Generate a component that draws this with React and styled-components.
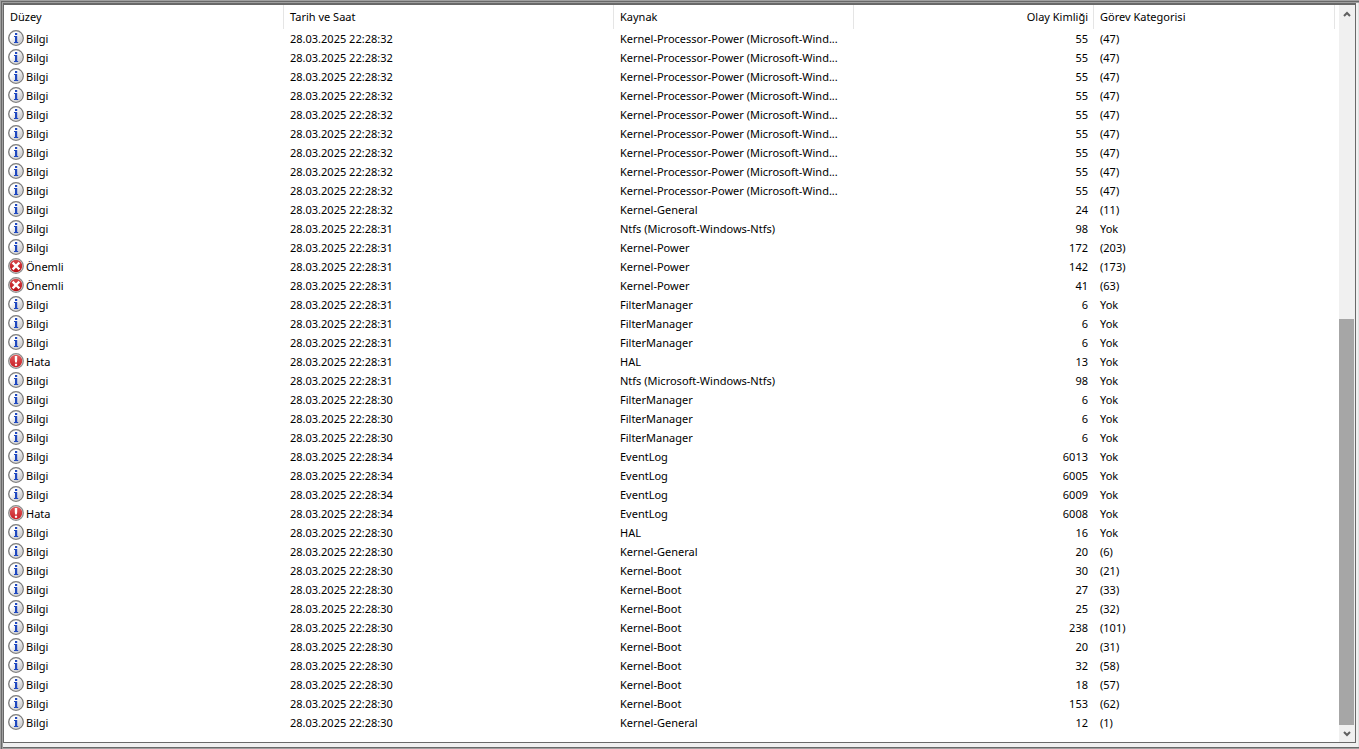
import React from 'react';
import styled, { createGlobalStyle } from 'styled-components';

const power = 'Kernel-Processor-Power (Microsoft-Wind...';
const ntfs = 'Ntfs (Microsoft-Windows-Ntfs)';

// [level, time, source, event id, category]
const events = [
  ...Array(9).fill(['Bilgi', '22:28:32', power, 55, '(47)']),
  ['Bilgi', '22:28:32', 'Kernel-General', 24, '(11)'],
  ['Bilgi', '22:28:31', ntfs, 98, 'Yok'],
  ['Bilgi', '22:28:31', 'Kernel-Power', 172, '(203)'],
  ['Önemli', '22:28:31', 'Kernel-Power', 142, '(173)'],
  ['Önemli', '22:28:31', 'Kernel-Power', 41, '(63)'],
  ['Bilgi', '22:28:31', 'FilterManager', 6, 'Yok'],
  ['Bilgi', '22:28:31', 'FilterManager', 6, 'Yok'],
  ['Bilgi', '22:28:31', 'FilterManager', 6, 'Yok'],
  ['Hata', '22:28:31', 'HAL', 13, 'Yok'],
  ['Bilgi', '22:28:31', ntfs, 98, 'Yok'],
  ['Bilgi', '22:28:30', 'FilterManager', 6, 'Yok'],
  ['Bilgi', '22:28:30', 'FilterManager', 6, 'Yok'],
  ['Bilgi', '22:28:30', 'FilterManager', 6, 'Yok'],
  ['Bilgi', '22:28:34', 'EventLog', 6013, 'Yok'],
  ['Bilgi', '22:28:34', 'EventLog', 6005, 'Yok'],
  ['Bilgi', '22:28:34', 'EventLog', 6009, 'Yok'],
  ['Hata', '22:28:34', 'EventLog', 6008, 'Yok'],
  ['Bilgi', '22:28:30', 'HAL', 16, 'Yok'],
  ['Bilgi', '22:28:30', 'Kernel-General', 20, '(6)'],
  ['Bilgi', '22:28:30', 'Kernel-Boot', 30, '(21)'],
  ['Bilgi', '22:28:30', 'Kernel-Boot', 27, '(33)'],
  ['Bilgi', '22:28:30', 'Kernel-Boot', 25, '(32)'],
  ['Bilgi', '22:28:30', 'Kernel-Boot', 238, '(101)'],
  ['Bilgi', '22:28:30', 'Kernel-Boot', 20, '(31)'],
  ['Bilgi', '22:28:30', 'Kernel-Boot', 32, '(58)'],
  ['Bilgi', '22:28:30', 'Kernel-Boot', 18, '(57)'],
  ['Bilgi', '22:28:30', 'Kernel-Boot', 153, '(62)'],
  ['Bilgi', '22:28:30', 'Kernel-General', 12, '(1)'],
];

const badges = {
  Bilgi: { fill: 'url(#silver)', ring: '#7d7d7d' },
  Önemli: { fill: 'url(#crimson)', ring: '#8c8c8c' },
  Hata: { fill: 'url(#red)', ring: '#8c8c8c' },
};

function LevelIcon({ level }) {
  const badge = badges[level];
  return (
    <Icon viewBox="0 0 16 16" aria-hidden="true">
      <circle cx="8" cy="8" r="7.3" fill="#e4e4e4" stroke={badge.ring} strokeWidth="1.3" />
      <circle cx="8" cy="8" r="6.2" fill={badge.fill} />
      {level === 'Bilgi' && (
        <path d="M7 3h2.2v2H7zM6 6h3.2v6h1v1H6v-1h1V7H6z" fill="#1f48c0" />
      )}
      {level === 'Önemli' && (
        <path d="M5.5 5.5l5 5M10.5 5.5l-5 5" stroke="#fff" strokeWidth="2.4" strokeLinecap="square" />
      )}
      {level === 'Hata' && (
        <path d="M6.8 3h2.4v4.2L8.8 9.6H7.2l-.4-2.4zM6.9 10.8h2.2v2H6.9z" fill="#fff" />
      )}
    </Icon>
  );
}

function App() {
  return (
    <Frame>
      <GlobalStyle />
      <Gradients aria-hidden="true">
        <defs>
          <linearGradient id="silver" x1="0" y1="0" x2="1" y2="1">
            <stop offset="0.3" stopColor="#fff" />
            <stop offset="1" stopColor="#bcbcc0" />
          </linearGradient>
          <linearGradient id="crimson" x1="0" y1="0" x2="0" y2="1">
            <stop offset="0" stopColor="#d9494c" />
            <stop offset="1" stopColor="#b80c12" />
          </linearGradient>
          <linearGradient id="red" x1="0" y1="0" x2="0" y2="1">
            <stop offset="0" stopColor="#e0595c" />
            <stop offset="1" stopColor="#c81e24" />
          </linearGradient>
        </defs>
      </Gradients>
      <Panel>
        <ListArea>
          <EventTable>
            <colgroup>
              <Column $width={280} />
              <Column $width={330} />
              <Column $width={240} />
              <Column $width={240} />
              <Column />
            </colgroup>
            <thead>
              <tr>
                <HeadCell scope="col">Düzey</HeadCell>
                <HeadCell scope="col">Tarih ve Saat</HeadCell>
                <HeadCell scope="col">Kaynak</HeadCell>
                <HeadCell scope="col" $align="right">Olay Kimliği</HeadCell>
                <HeadCell scope="col">Görev Kategorisi</HeadCell>
              </tr>
            </thead>
            <tbody>
              {events.map(([level, time, source, id, category], index) => (
                <tr key={index}>
                  <Cell>
                    <Level>
                      <LevelIcon level={level} />
                      {level}
                    </Level>
                  </Cell>
                  <Cell>28.03.2025 {time}</Cell>
                  <Cell>{source}</Cell>
                  <Cell $align="right">{id}</Cell>
                  <Cell>{category}</Cell>
                </tr>
              ))}
            </tbody>
          </EventTable>
        </ListArea>
        <ScrollBar>
          <ScrollButton type="button" aria-label="Yukarı kaydır">
            <Arrow viewBox="0 0 8 6"><path d="M1 5l3-3 3 3" /></Arrow>
          </ScrollButton>
          <Track><Thumb /></Track>
          <ScrollButton type="button" aria-label="Aşağı kaydır">
            <Arrow viewBox="0 0 8 6"><path d="M1 1l3 3 3-3" /></Arrow>
          </ScrollButton>
        </ScrollBar>
      </Panel>
      <BottomEdge />
    </Frame>
  );
}

const GlobalStyle = createGlobalStyle`
  body {
    margin: 0;
    background: #f0f0f0;
    color: #000;
    font: 11px/19px "Noto Sans", "Open Sans", sans-serif;
  }
`;

// sunken window edge: light, dark, light
const Frame = styled.div`
  display: flex;
  flex-direction: column;
  box-sizing: border-box;
  height: 100vh;
  padding: 3px 0 0 3px;
  box-shadow:
    inset 1px 1px 0 #a0a0a0,
    inset 2px 2px 0 #696969,
    inset 3px 3px 0 #a0a0a0,
    inset -1px 0 0 #e3e3e3;
`;

const Panel = styled.main`
  display: flex;
  flex: 1;
  min-height: 0;
  margin-right: 3px;
  background: #fff;
  border: 1px solid #696969;
  border-top-width: 2px;
`;

const BottomEdge = styled.div`
  box-sizing: border-box;
  height: 2px;
  margin-top: 4px;
  background: #a0a0a0;
  border-top: 1px solid #696969;
`;

const ListArea = styled.div`
  flex: 1;
  min-width: 0;
  padding-right: 4px;
  overflow: hidden;
`;

const EventTable = styled.table`
  width: 100%;
  table-layout: fixed;
  border-spacing: 0;
`;

const Column = styled.col`
  width: ${({ $width }) => ($width ? `${$width}px` : 'auto')};
`;

const HeadCell = styled.th`
  box-sizing: border-box;
  height: 24px;
  padding: 0 5px 1px 6px;
  border-right: 1px solid #e5e5e5;
  font-weight: 400;
  text-align: ${({ $align }) => $align || 'left'};
`;

const Cell = styled.td`
  height: 19px;
  padding: 0 6px;
  overflow: hidden;
  text-align: ${({ $align }) => $align || 'left'};
  white-space: nowrap;
`;

const Level = styled.span`
  display: flex;
  align-items: flex-start;
  gap: 2px;
  margin-left: -2px;
`;

const Icon = styled.svg`
  flex: none;
  width: 16px;
  height: 16px;
  margin-top: 1px;
`;

const Gradients = styled.svg`
  position: absolute;
  width: 0;
  height: 0;
`;

const ScrollBar = styled.div`
  display: flex;
  flex-direction: column;
  width: 16px;
  background: #f0f0f0;
`;

const ScrollButton = styled.button`
  display: flex;
  align-items: center;
  justify-content: center;
  height: 17px;
  padding: 0;
  background: none;
  border: 0;
`;

const Arrow = styled.svg`
  width: 8px;
  height: 6px;
  fill: none;
  stroke: #606060;
  stroke-width: 2;
`;

const Track = styled.div`
  display: grid;
  flex: 1;
  grid-template-rows: 297fr 406fr;
`;

const Thumb = styled.div`
  grid-row: 2;
  margin-right: 1px;
  background: #a6a6a6;
`;

export default App;
